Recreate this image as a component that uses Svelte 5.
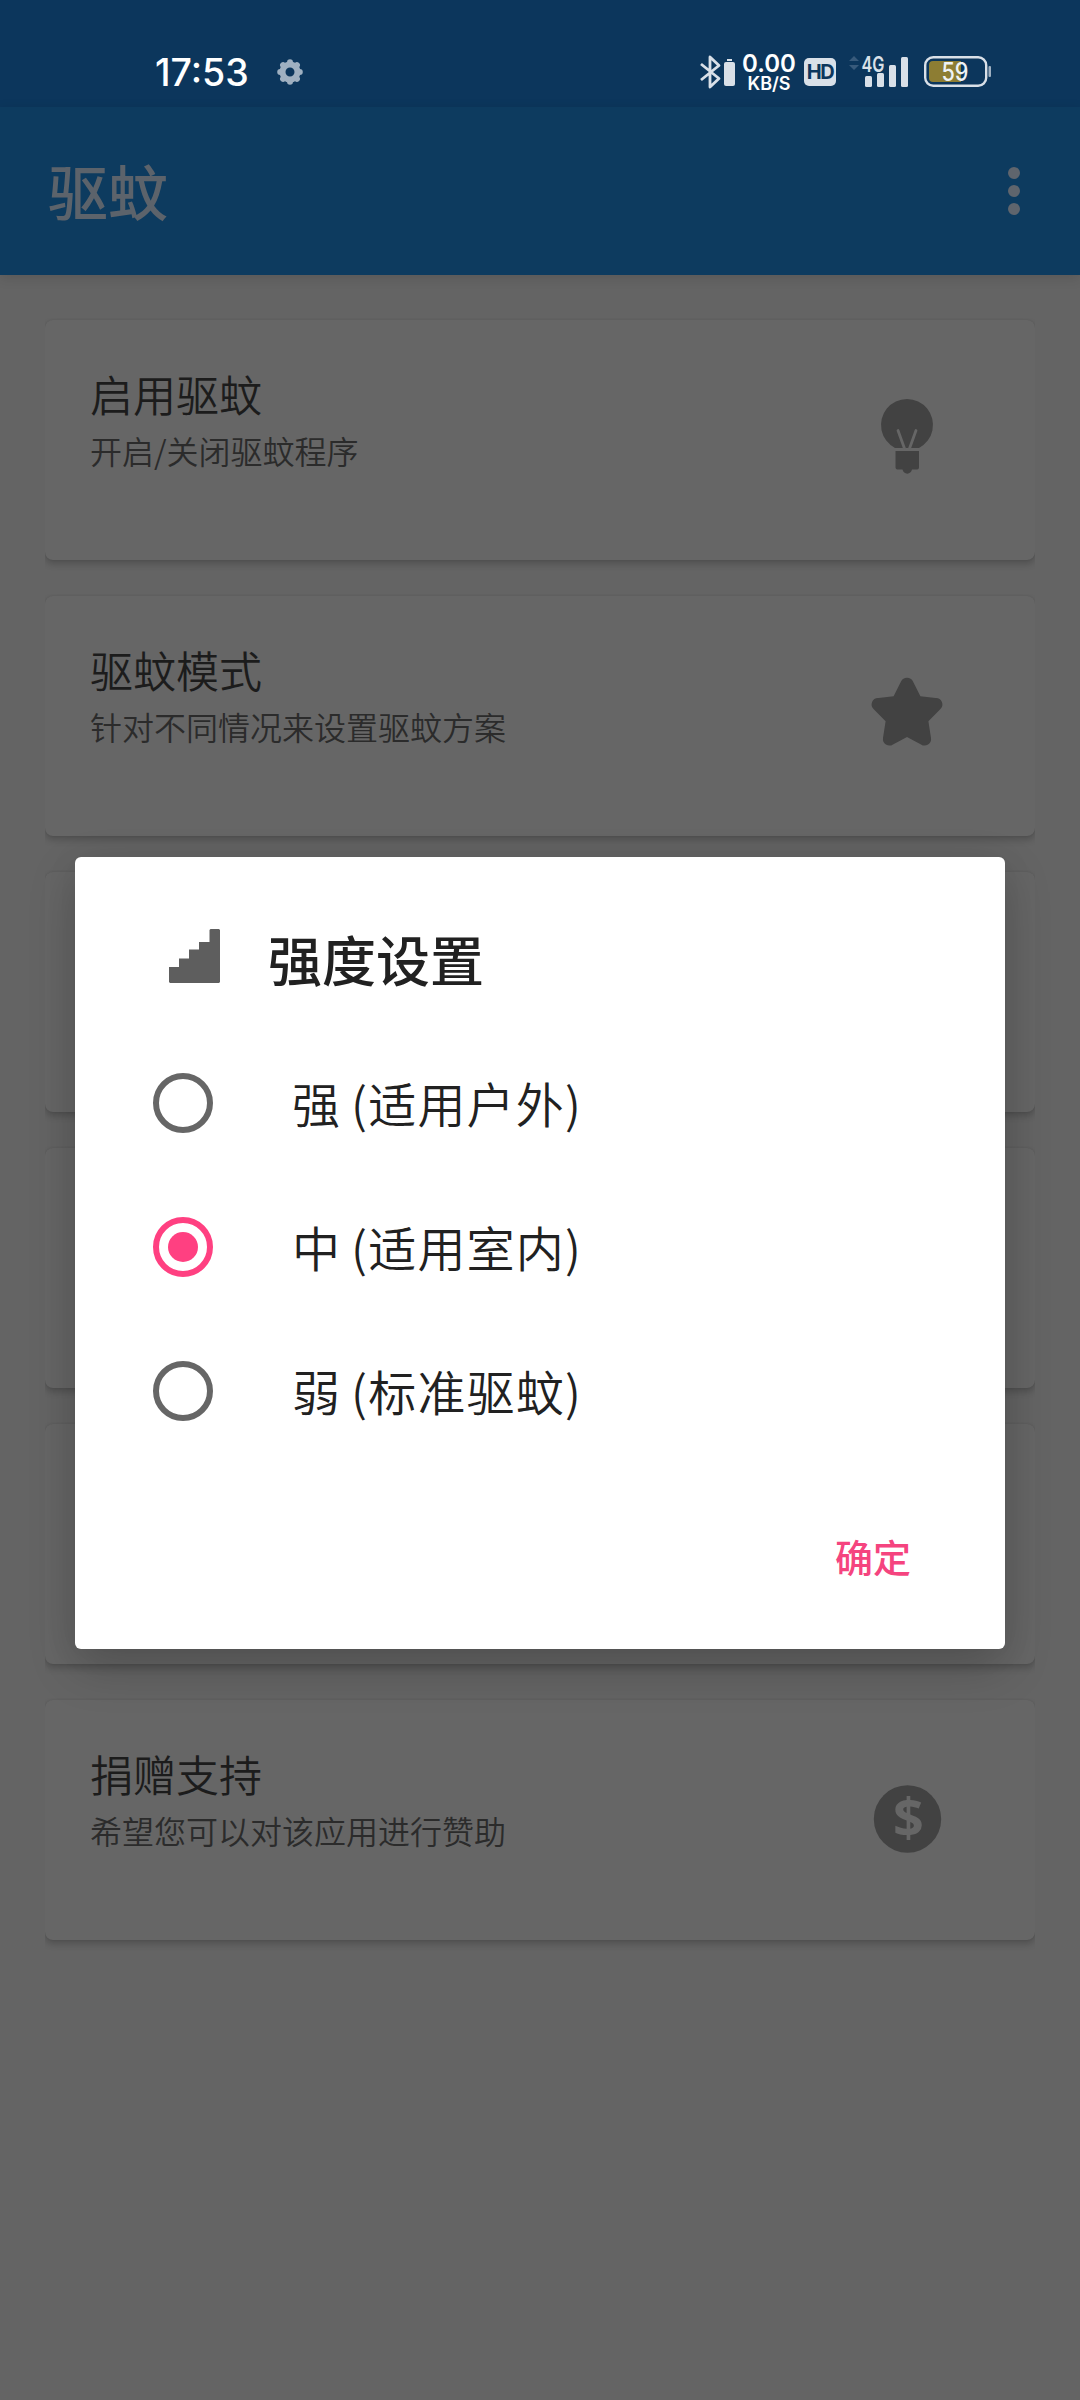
<script>
  const cards = [
    { title: '启用驱蚊', sub: '开启/关闭驱蚊程序', icon: 'bulb' },
    { title: '驱蚊模式', sub: '针对不同情况来设置驱蚊方案', icon: 'star' },
    {}, {}, {},
    { title: '捐赠支持', sub: '希望您可以对该应用进行赞助', icon: 'dollar' }
  ];
  const options = ['强 (适用户外)', '中 (适用室内)', '弱 (标准驱蚊)'];
  let selected = $state(1);
</script>

<div class="screen">
  <header class="status">
    <span class="clock">17:53</span>
    <svg class="gear" width="26" height="26" viewBox="-13 -13 26 26">
      <g fill="#9fb0c1">
        {#each [0, 45, 90, 135, 180, 225, 270, 315] as a}
          <circle cx="0" cy="-9.8" r="3" transform="rotate({a})" />
        {/each}
      </g>
      <circle r="7.5" fill="none" stroke="#9fb0c1" stroke-width="6" />
    </svg>
    <svg class="bt" width="36" height="36" viewBox="0 0 36 36">
      <path d="M2 10 20 24.500 11 33V3l9 8.500L2 26" fill="none" stroke="#d9e0e8" stroke-width="2.8" stroke-linejoin="round" />
      <rect x="25" y="8" width="11" height="24" rx="2" fill="#d9e0e8" />
      <rect x="28" y="5" width="5" height="2" fill="#d9e0e8" />
    </svg>
    <span class="speed"><b>0.00</b><i>KB/S</i></span>
    <span class="hd">HD</span>
    <svg class="signal" width="62" height="34" viewBox="0 0 62 34">
      <path d="M1 6 6 1l5 5zM1 10h10l-5 5z" fill="#385a7b" />
      <text x="13.500" y="16.500" textLength="23" lengthAdjust="spacingAndGlyphs">4G</text>
      <g fill="#d9e0e8">
        <rect x="17" y="21" width="7" height="11" rx="1.5" />
        <rect x="29" y="18" width="7" height="14" rx="1.5" />
        <rect x="41" y="10" width="7" height="22" rx="1.5" />
        <rect x="53" y="2" width="7" height="30" rx="1.5" />
      </g>
    </svg>
    <svg class="battery" width="68" height="32" viewBox="0 0 68 32">
      <rect x="1.2" y="1.2" width="61" height="28.6" rx="8" fill="none" stroke="#d9e0e8" stroke-width="2.4" />
      <path d="M9 5H37V26H9a4 4 0 0 1-4-4V9a4 4 0 0 1 4-4z" fill="#8d7d33" />
      <rect x="64.5" y="10" width="2.5" height="11" rx="1" fill="#9fb0c1" />
      <text x="31" y="24.500" text-anchor="middle" textLength="27" lengthAdjust="spacingAndGlyphs">59</text>
    </svg>
  </header>

  <div class="appbar">
    <h1>驱蚊</h1>
    <div class="more"><span></span><span></span><span></span></div>
  </div>

  <main>
    {#each cards as c}
      <section class="card">
        {#if c.title}
          <div class="copy">
            <h2>{c.title}</h2>
            <p>{c.sub}</p>
          </div>
          <svg class="icon" width="80" height="80" viewBox="0 0 80 80">
            {#if c.icon === 'bulb'}
              <path d="M28 48A26 26 0 1 1 52 48Z" fill="#424242" />
              <path d="M31 30.500 37.500 48.500M49 30.500 42.500 48.500" stroke="#666" stroke-width="2.8" stroke-linecap="round" />
              <path d="M28.500 51h23.500v16.500a2 2 0 0 1-2 2h-5c-1 5.500-8.500 5.500-9.500 0h-5a2 2 0 0 1-2-2z" fill="#424242" />
            {:else if c.icon === 'star'}
              <path d="M34 5.500A6.700 6.700 0 0 1 46 5.500L53.400 20.300 68.500 22A6.500 6.500 0 0 1 73 33.500L61.400 45.300 64 62A6.500 6.500 0 0 1 54 68.400L40 61 26 68.400A6.500 6.500 0 0 1 16 62L18.600 45.300 7 33.500A6.500 6.500 0 0 1 11.500 22L26.600 20.300Z" fill="#424242" />
            {:else}
              <circle cx="40.500" cy="39" r="33.700" fill="#424242" />
              <text x="41.500" y="57" text-anchor="middle" class="dollar">$</text>
            {/if}
          </svg>
        {/if}
      </section>
    {/each}
  </main>

  <div class="dialog" role="dialog" aria-label="强度设置">
    <div class="heading">
      <svg width="51" height="54" viewBox="0 0 51 54">
        <path d="M0 38H10V29.500H20V20.500H30V13H40.500V1L41.500 0H50L51 1V53L50 54H1L0 53Z" fill="#5e5e5e" />
      </svg>
      <h3>强度设置</h3>
    </div>
    {#each options as o, i}
      <button class="option" onclick={() => (selected = i)}>
        <span class="radio" class:on={selected === i}></span>
        <span class="label">{o}</span>
      </button>
    {/each}
    <button class="ok">确定</button>
  </div>
</div>

<style>
  :global(body) { margin: 0; background: #646464; }
  .screen {
    position: relative;
    width: 1080px;
    height: 2400px;
    overflow: hidden;
    background: #646464;
    font-family: "Noto Sans CJK SC", sans-serif;
  }
  h1, h2, h3, p { margin: 0; font-weight: 400; }
  button { border: 0; padding: 0; background: none; font: inherit; text-align: left; }
  svg { flex: none; overflow: visible; }
  .status {
    box-sizing: border-box;
    height: 107px;
    padding: 36px 88px 0 155px;
    background: #0c365c;
    display: flex;
    align-items: center;
    font-family: Inter, sans-serif;
  }
  .clock { width: 94px; padding-top: 3px; font: 500 37.500px/72px Inter, sans-serif; color: #fff; white-space: nowrap; }
  .gear { margin-left: 28px; }
  .bt { margin-left: auto; }
  .speed {
    width: 52px;
    margin: 4px 0 0 8px;
    display: flex;
    flex-direction: column;
    align-items: center;
    color: #fff;
  }
  .speed b { font: 600 24px/20px Inter, sans-serif; }
  .speed i { font: 600 18px/20px Inter, sans-serif; }
  .hd {
    width: 32px;
    height: 28px;
    margin-left: 9px;
    border-radius: 5px;
    background: #d9e0e8;
    color: #0c365c;
    font: 700 20px/28px Inter, sans-serif;
    letter-spacing: -1.5px;
    text-align: center;
  }
  .signal { margin-left: 12px; }
  .signal text { font: 600 22px Inter, sans-serif; fill: #d9e0e8; }
  .battery { margin-left: 14px; }
  .battery text { font: 500 25px Inter, sans-serif; fill: #eef2f6; }
  .appbar {
    position: relative;
    box-sizing: border-box;
    height: 168px;
    padding: 0 60px 0 48px;
    background: #0d3b5f;
    box-shadow: 0 3px 12px rgba(0, 0, 0, .12);
    display: flex;
    align-items: center;
    justify-content: space-between;
  }
  h1 { font-size: 60px; line-height: 88px; font-weight: 500; color: #5c636b; padding-bottom: 2px; }
  .more { display: flex; flex-direction: column; gap: 6px; }
  .more span { width: 12px; height: 12px; border-radius: 50%; background: #5f656d; }
  main { padding: 45px 45px 0; display: flex; flex-direction: column; gap: 36px; }
  /* the shadow shows above and below a card, not at its sides */
  .card {
    height: 240px;
    box-sizing: border-box;
    padding: 0 88px 0 45px;
    border-radius: 8px;
    background: #666;
    box-shadow: 0 4px 7px rgba(0, 0, 0, .2), 0 0 2px rgba(0, 0, 0, .1);
    clip-path: inset(-2px 0 -16px);
    display: flex;
    justify-content: space-between;
  }
  .copy { padding-top: 41px; }
  h2 { font-size: 43px; line-height: 64px; color: #1c1c1c; font-weight: 350; }
  p { padding-top: 1px; font-size: 32px; line-height: 48px; color: #2b2b2b; font-weight: 350; }
  .icon { margin-top: 80px; }
  .dollar { font: 700 54px "Open Sans", sans-serif; fill: #666; }
  .dialog {
    position: absolute;
    left: 75px;
    top: 857px;
    width: 930px;
    height: 792px;
    box-sizing: border-box;
    padding-top: 60px;
    border-radius: 6px;
    background: #fff;
    box-shadow: 0 18px 48px rgba(0, 0, 0, .2), 0 2px 36px rgba(0, 0, 0, .05);
    display: flex;
    flex-direction: column;
  }
  .heading { height: 114px; padding-left: 94px; display: flex; }
  .heading svg { margin-top: 12px; }
  h3 { margin-left: 48px; font-size: 54px; line-height: 84px; font-weight: 500; color: #212121; }
  .option { height: 144px; padding-left: 78px; display: flex; align-items: center; color: #212121; }
  .radio {
    width: 60px;
    height: 60px;
    box-sizing: border-box;
    border: 6px solid #666;
    border-radius: 50%;
    display: grid;
    place-items: center;
  }
  .radio.on { border-color: #ff4081; }
  .radio.on::after { content: ""; width: 30px; height: 30px; border-radius: 50%; background: #ff4081; }
  .label { margin-left: 79px; padding-bottom: 3px; font-size: 48px; line-height: 72px; font-weight: 350; letter-spacing: 1.2px; word-spacing: -2px; }
  .ok { align-self: flex-end; margin: 65px 94px 0 0; font-size: 38px; line-height: 56px; font-weight: 500; color: #f5447f; }
</style>
